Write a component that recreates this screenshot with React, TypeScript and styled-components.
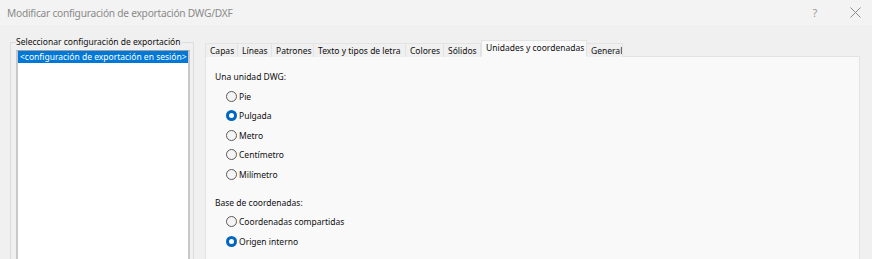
import React from "react";
import styled, { createGlobalStyle } from "styled-components";

const Global = createGlobalStyle`
  html, body { margin: 0; padding: 0; }
  body {
    width: 872px; height: 259px; overflow: hidden;
    background: #f0f0f0;
    font-family: "Noto Sans", "Liberation Sans", sans-serif;
    color: #0f0f0f;
  }
`;

const Window = styled.div`
  width: 872px;
  height: 259px;
  display: flex;
  flex-direction: column;
  background: #f0f0f0;
  overflow: hidden;
`;

const TitleBar = styled.div`
  height: 25px;
  flex: none;
  display: flex;
  align-items: center;
  background: #f3f3f3;
  padding-left: 7px;
`;

const Title = styled.div`
  flex: 1;
  font-size: 10.2px;
  letter-spacing: -0.25px;
  color: #8a8a8a;
  white-space: nowrap;
`;

const TitleButton = styled.div<{ $w: number }>`
  width: ${(p) => p.$w}px;
  height: 25px;
  display: flex;
  align-items: center;
  justify-content: center;
  color: #9a9a9a;
  font-size: 11px;
`;

const Body = styled.div`
  flex: 1;
  display: flex;
  align-items: flex-start;
  padding: 11px 0 0 10px;
`;

const GroupBox = styled.fieldset`
  margin: 0;
  width: 184px;
  min-width: 0;
  height: 260px;
  box-sizing: border-box;
  border: 1px solid #dcdcdc;
  border-radius: 0;
  padding: 0 3px 0 5px;
  flex: none;
`;

const Legend = styled.legend`
  font-size: 8.5px;
  padding: 0 1px 0 0;
  margin-left: 0;
  line-height: 12px;
  white-space: nowrap;
`;

const ListBox = styled.div`
  margin-top: 2px;
  height: 260px;
  background: #ffffff;
  border-top: 1px solid #a0a0a0;
  border-right: 2px solid #c8c8cc;
  border-left: 2px solid #c8c8cc;
`;

const ListItem = styled.div<{ $selected?: boolean }>`
  height: 12px;
  line-height: 12px;
  font-size: 8.5px;
  padding-left: 2px;
  white-space: nowrap;
  background: ${(p) => (p.$selected ? "#0078d7" : "transparent")};
  color: ${(p) => (p.$selected ? "#ffffff" : "#0f0f0f")};
`;

const TabArea = styled.div`
  margin-left: 11px;
  margin-top: 4px;
  width: 655px;
  display: flex;
  flex-direction: column;
`;

const TabRow = styled.div`
  display: flex;
  align-items: flex-end;
  height: 17px;
  position: relative;
  z-index: 1;
`;

const Tab = styled.div<{ $active?: boolean; $first?: boolean; $w: number }>`
  width: ${(p) => p.$w}px;
  flex: none;
  box-sizing: border-box;
  height: ${(p) => (p.$active ? 17 : 14)}px;
  padding-left: 4px;
  font-size: 8.5px;
  line-height: ${(p) => (p.$active ? 14 : 13)}px;
  white-space: nowrap;
  overflow: hidden;
  background: ${(p) => (p.$active ? "#f9f9f9" : "#f0f0f0")};
  border: 1px solid #e3e3e3;
  border-bottom: ${(p) => (p.$active ? "1px solid #f9f9f9" : "none")};
  border-left: ${(p) => (p.$first || p.$active ? "1px solid #e3e3e3" : "none")};
`;

const Panel = styled.div`
  height: 220px;
  background: #f9f9f9;
  border: 1px solid #e3e3e3;
  margin-top: -1px;
  padding: 14px 0 0 9px;
  box-sizing: border-box;
`;

const SectionLabel = styled.div`
  font-size: 8.5px;
  line-height: 12px;
  height: 12px;
  margin-bottom: 7px;
`;

const RadioList = styled.div`
  display: flex;
  flex-direction: column;
  gap: 7px;
  padding-left: 11px;
  margin-bottom: 16px;
`;

const RadioRow = styled.label`
  display: flex;
  align-items: center;
  gap: 2px;
  height: 12.5px;
  font-size: 8.5px;
`;

const RadioCircle = styled.span<{ $checked?: boolean }>`
  width: 11px;
  height: 11px;
  box-sizing: border-box;
  border-radius: 50%;
  flex: none;
  border: ${(p) => (p.$checked ? "none" : "1px solid #5a5a5a")};
  background: ${(p) => (p.$checked ? "#0067c0" : "#f4f4f4")};
  display: flex;
  align-items: center;
  justify-content: center;
  &::after {
    content: "";
    display: ${(p) => (p.$checked ? "block" : "none")};
    width: 5px;
    height: 5px;
    border-radius: 50%;
    background: #ffffff;
  }
`;

const Radio = ({ label, checked }: { label: string; checked?: boolean }) => (
  <RadioRow>
    <RadioCircle $checked={checked} />
    <span>{label}</span>
  </RadioRow>
);

const tabs: { label: string; w: number; active?: boolean }[] = [
  { label: "Capas", w: 33 },
  { label: "Líneas", w: 34 },
  { label: "Patrones", w: 42 },
  { label: "Texto y tipos de letra", w: 92 },
  { label: "Colores", w: 38 },
  { label: "Sólidos", w: 37 },
  { label: "Unidades y coordenadas", w: 106, active: true },
  { label: "General", w: 36 },
];

export default function App() {
  return (
    <>
      <Global />
      <Window>
        <TitleBar>
          <Title>Modificar configuración de exportación DWG/DXF</Title>
          <TitleButton $w={46}>?</TitleButton>
          <TitleButton $w={34}>
            <svg width="11" height="11" viewBox="0 0 11 11">
              <path d="M0.5 0.5 L10.5 10.5 M10.5 0.5 L0.5 10.5" stroke="#8a8a8a" strokeWidth="1" />
            </svg>
          </TitleButton>
        </TitleBar>
        <Body>
          <GroupBox>
            <Legend>Seleccionar configuración de exportación</Legend>
            <ListBox>
              <ListItem $selected>&lt;configuración de exportación en sesión&gt;</ListItem>
            </ListBox>
          </GroupBox>
          <TabArea>
            <TabRow>
              {tabs.map((t, i) => (
                <Tab key={t.label} $w={t.w} $active={t.active} $first={i === 0}>
                  {t.label}
                </Tab>
              ))}
            </TabRow>
            <Panel>
              <SectionLabel>Una unidad DWG:</SectionLabel>
              <RadioList>
                <Radio label="Pie" />
                <Radio label="Pulgada" checked />
                <Radio label="Metro" />
                <Radio label="Centímetro" />
                <Radio label="Milímetro" />
              </RadioList>
              <SectionLabel>Base de coordenadas:</SectionLabel>
              <RadioList>
                <Radio label="Coordenadas compartidas" />
                <Radio label="Origen interno" checked />
              </RadioList>
            </Panel>
          </TabArea>
        </Body>
      </Window>
    </>
  );
}
